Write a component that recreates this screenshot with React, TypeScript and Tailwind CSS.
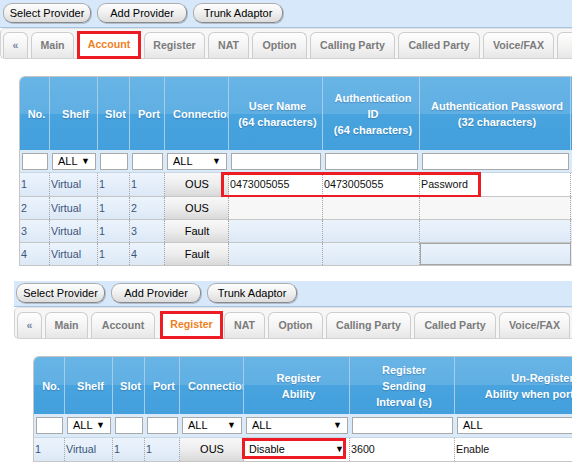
import React from "react";

type TabT = { l: string; w: string; active?: boolean; extra?: string };
type Col = { w: string; h: React.ReactNode; pad?: string };

const hdrBg =
  "bg-[linear-gradient(180deg,#68b4e6_0%,#60afe3_50%,#48a3de_50%,#43a0dc_100%)]";
const rowBg =
  "bg-[linear-gradient(180deg,#ebf3fc_0%,#e5effa_50%,#dce8f6_100%)]";
const connBg =
  "bg-[linear-gradient(180deg,#f8f8f8_0%,#ededed_50%,#d9d9d9_100%)]";

function Btn({ label, w }: { label: string; w: string }) {
  return (
    <div
      className={`${w} h-[20px] shrink-0 flex items-center justify-center rounded-[9px] border border-[#8a8a8a] border-t-[#adadad] border-l-[#adadad] bg-[linear-gradient(180deg,#fdfdfd_0%,#f0f0f0_50%,#dcdcdc_100%)] text-[11px] text-black shadow-[1px_1px_0_rgba(0,0,0,0.18)]`}
    >
      {label}
    </div>
  );
}

function ButtonBar({ cls, first }: { cls: string; first: string }) {
  return (
    <div className={`flex gap-[6px] bg-[#d7e8fb] border-b border-[#a6c4e2] ${cls}`}>
      <Btn label="Select Provider" w={first} />
      <Btn label="Add Provider" w="w-[90px]" />
      <Btn label="Trunk Adaptor" w="w-[90px]" />
    </div>
  );
}

function Tab({ t }: { t: TabT }) {
  if (t.active) {
    return (
      <div
        className={`${t.w} ${t.extra ?? ""} h-[28px] -mb-[1px] shrink-0 flex items-center justify-center border-[3px] border-[#ed1c24] bg-white text-[#f07f1e] font-bold text-[10.6px]`}
      >
        {t.l}
      </div>
    );
  }
  return (
    <div
      className={`${t.w} h-[26px] shrink-0 flex items-center justify-center rounded-t-[6px] border border-b-0 border-[#cdcdcd] bg-[linear-gradient(180deg,#fefefe_0%,#f2f2f2_60%,#e6e6e6_100%)] font-bold text-[10.6px] ${
        t.l === "«" ? "text-[#7587a1]" : "text-[#7b7b7b]"
      }`}
    >
      {t.l}
    </div>
  );
}

function TabBar({ tabs, h }: { tabs: TabT[]; h: string }) {
  return (
    <div
      className={`${h} flex items-end gap-[3px] pl-[2px] border border-r-0 border-t-[#e2e2e2] border-[#d3d3d3] rounded-l-[5px] bg-[#f6f6f6] overflow-visible`}
    >
      {tabs.map((t) => (
        <Tab key={t.l} t={t} />
      ))}
    </div>
  );
}

function Input({ text }: { text?: string }) {
  return (
    <div className="w-full h-[17px] bg-white border border-[#a9a9a9] flex items-center pl-[5px] text-[11px] text-black">
      {text}
    </div>
  );
}

function Select({ text, arrow = true }: { text: string; arrow?: boolean }) {
  return (
    <div className="w-full h-[17px] bg-white border border-[#a9a9a9] flex items-center justify-between pl-[5px] pr-[5px] text-[11px] text-black">
      <span>{text}</span>
      {arrow && <span className="text-[9px] leading-none">▼</span>}
    </div>
  );
}

function HeaderRow({ cols, h }: { cols: Col[]; h: string }) {
  return (
    <div className={`flex ${h} ${hdrBg}`}>
      {cols.map((c, i) => (
        <div
          key={i}
          className={`${c.w} shrink-0 h-full flex items-center overflow-hidden border-r border-[#a5cdea] ${
            c.pad ?? "pl-[5px] pr-[1px]"
          }`}
        >
          <div className="w-full text-center whitespace-nowrap text-white font-bold text-[11px] leading-[16px] [text-shadow:0_1px_1px_rgba(20,70,120,0.35)]">
            {c.h}
          </div>
        </div>
      ))}
    </div>
  );
}

const cellBase =
  "shrink-0 h-full flex items-center pl-[1px] border-r border-dotted border-[#a5a5a5] text-[10.7px] overflow-hidden whitespace-nowrap";
const blue = "text-[#3b5479]";

function Section1() {
  const cols: Col[] = [
    { w: "w-[30px]", h: "No." },
    { w: "w-[48px]", h: "Shelf" },
    { w: "w-[32px]", h: "Slot" },
    { w: "w-[35px]", h: "Port" },
    { w: "w-[64px]", h: "Connection", pad: "pl-[8px] pr-0" },
    {
      w: "w-[94px]",
      h: (
        <>
          User Name
          <br />
          (64 characters)
        </>
      ),
    },
    {
      w: "w-[97px]",
      h: (
        <>
          Authentication
          <br />
          ID
          <br />
          (64 characters)
        </>
      ),
    },
    {
      w: "w-[151px]",
      h: (
        <>
          Authentication Password
          <br />
          (32 characters)
        </>
      ),
    },
    { w: "w-[120px]", h: "" },
  ];
  const w = cols.map((c) => c.w);
  const rows = [
    { n: "1", conn: "OUS", edit: "bg-white", u: "0473005055", a: "0473005055", p: "Password" },
    { n: "2", conn: "OUS", edit: "bg-[#f7f7f7]", u: "", a: "", p: "" },
    { n: "3", conn: "Fault", edit: "", u: "", a: "", p: "" },
    { n: "4", conn: "Fault", edit: "", u: "", a: "", p: "", focus: true },
  ];
  const tabs: TabT[] = [
    { l: "«", w: "w-[25px]" },
    { l: "Main", w: "w-[43px]" },
    { l: "Account", w: "w-[64px]", active: true },
    { l: "Register", w: "w-[61px]" },
    { l: "NAT", w: "w-[41px]" },
    { l: "Option", w: "w-[55px]" },
    { l: "Calling Party", w: "w-[85px]" },
    { l: "Called Party", w: "w-[82px]" },
    { l: "Voice/FAX", w: "w-[71px]" },
    { l: "RTP", w: "w-[50px]" },
  ];
  return (
    <div>
      <ButtonBar cls="h-[28px] pt-[3px] pl-[3px]" first="w-[88px]" />
      <TabBar tabs={tabs} h="h-[31px]" />
      <div className="pt-[17px]">
        <div className="ml-[19px] w-max border-l border-t border-[#c6c6c6] rounded-tl-[6px] overflow-hidden">
          <HeaderRow cols={cols} h="h-[73px]" />
          <div className="flex h-[23px] items-center bg-[#dbeaf8] border-b border-[#c9d7e4]">
            <div className={`${w[0]} shrink-0 px-[2px]`}><Input /></div>
            <div className={`${w[1]} shrink-0 px-[2px]`}><Select text="ALL" /></div>
            <div className={`${w[2]} shrink-0 px-[2px]`}><Input /></div>
            <div className={`${w[3]} shrink-0 px-[2px]`}><Input /></div>
            <div className={`${w[4]} shrink-0 px-[2px]`}><Select text="ALL" /></div>
            <div className={`${w[5]} shrink-0 px-[2px]`}><Input /></div>
            <div className={`${w[6]} shrink-0 px-[2px]`}><Input /></div>
            <div className={`${w[7]} shrink-0 px-[2px]`}><Input /></div>
            <div className={`${w[8]} shrink-0`} />
          </div>
          {rows.map((r, i) => (
            <div
              key={r.n}
              className={`relative flex ${i === 0 ? "h-[24px]" : "h-[23px]"} border-b border-[#c6c6c6] ${rowBg}`}
            >
              <div className={`${w[0]} ${cellBase} ${blue}`}>{r.n}</div>
              <div className={`${w[1]} ${cellBase} ${blue}`}>Virtual</div>
              <div className={`${w[2]} ${cellBase} ${blue}`}>1</div>
              <div className={`${w[3]} ${cellBase} ${blue}`}>{r.n}</div>
              <div className={`${w[4]} ${cellBase} ${connBg} justify-center text-[11px] text-black`}>
                {r.conn}
              </div>
              <div className={`${w[5]} ${cellBase} ${r.edit} text-[#111]`}>{r.u}</div>
              <div className={`${w[6]} ${cellBase} ${r.edit} text-[#111]`}>{r.a}</div>
              <div
                className={`${w[7]} ${cellBase} ${r.edit} text-[#111] ${
                  r.focus ? "border border-solid border-[#858585]" : ""
                }`}
              >
                {r.p}
              </div>
              <div className={`${w[8]} ${cellBase} ${r.edit}`} />
              {i === 0 && (
                <div className="absolute left-[201px] top-[-1px] w-[260px] h-[26px] border-[3px] border-[#ed1c24] pointer-events-none" />
              )}
            </div>
          ))}
        </div>
      </div>
    </div>
  );
}

function Section2() {
  const cols: Col[] = [
    { w: "w-[31px]", h: "No." },
    { w: "w-[48px]", h: "Shelf" },
    { w: "w-[32px]", h: "Slot" },
    { w: "w-[35px]", h: "Port" },
    { w: "w-[64px]", h: "Connection", pad: "pl-[8px] pr-0" },
    {
      w: "w-[106px]",
      h: (
        <>
          Register
          <br />
          Ability
        </>
      ),
    },
    {
      w: "w-[105px]",
      h: (
        <>
          Register
          <br />
          Sending
          <br />
          Interval (s)
        </>
      ),
    },
    {
      w: "w-[172px]",
      h: (
        <>
          Un-Register
          <br />
          Ability when port fault
        </>
      ),
    },
  ];
  const w = cols.map((c) => c.w);
  const tabs: TabT[] = [
    { l: "«", w: "w-[25px]" },
    { l: "Main", w: "w-[43px]" },
    { l: "Account", w: "w-[64px]" },
    { l: "Register", w: "w-[63px]", active: true, extra: "ml-[2px] -mr-[2px]" },
    { l: "NAT", w: "w-[41px]" },
    { l: "Option", w: "w-[55px]" },
    { l: "Calling Party", w: "w-[85px]" },
    { l: "Called Party", w: "w-[82px]" },
    { l: "Voice/FAX", w: "w-[71px]" },
    { l: "RTP", w: "w-[50px]" },
  ];
  return (
    <div>
      <ButtonBar cls="h-[26px] pt-[2px] pl-[2px]" first="w-[89px]" />
      <TabBar tabs={tabs} h="h-[32px]" />
      <div className="pt-[17px]">
        <div className="ml-[19px] w-max border-l border-t border-[#c6c6c6] rounded-tl-[6px] overflow-hidden">
          <HeaderRow cols={cols} h="h-[57px]" />
          <div className="flex h-[24px] items-center bg-[#dbeaf8] border-b border-[#c9d7e4]">
            <div className={`${w[0]} shrink-0 px-[2px]`}><Input /></div>
            <div className={`${w[1]} shrink-0 px-[2px]`}><Select text="ALL" /></div>
            <div className={`${w[2]} shrink-0 px-[2px]`}><Input /></div>
            <div className={`${w[3]} shrink-0 px-[2px]`}><Input /></div>
            <div className={`${w[4]} shrink-0 px-[2px]`}><Select text="ALL" /></div>
            <div className={`${w[5]} shrink-0 px-[2px]`}><Select text="ALL" /></div>
            <div className={`${w[6]} shrink-0 px-[2px]`}><Input /></div>
            <div className={`${w[7]} shrink-0 px-[2px]`}><Select text="ALL" /></div>
          </div>
          <div className={`relative flex h-[24px] border-b border-[#c6c6c6] ${rowBg}`}>
            <div className={`${w[0]} ${cellBase} ${blue}`}>1</div>
            <div className={`${w[1]} ${cellBase} ${blue}`}>Virtual</div>
            <div className={`${w[2]} ${cellBase} ${blue}`}>1</div>
            <div className={`${w[3]} ${cellBase} ${blue}`}>1</div>
            <div className={`${w[4]} ${cellBase} ${connBg} justify-center text-[11px] text-black`}>
              OUS
            </div>
            <div className={`${w[5]} ${cellBase} bg-white px-[1px]`}>
              <div className="w-full h-[16px] flex items-center justify-between pl-[4px] pr-[4px] text-[10.7px] text-black">
                <span>Disable</span>
                <span className="text-[9px] leading-none">▼</span>
              </div>
            </div>
            <div className={`${w[6]} ${cellBase} bg-white text-[#111]`}>3600</div>
            <div className={`${w[7]} ${cellBase} bg-white text-[#111]`}>Enable</div>
            <div className="absolute left-[208px] top-[0px] w-[104px] h-[21px] border-[3px] border-[#ed1c24] pointer-events-none" />
          </div>
        </div>
      </div>
    </div>
  );
}

export default function App() {
  return (
    <div className="w-[572px] h-[465px] overflow-hidden bg-white font-['Liberation_Sans',Arial,sans-serif] text-black">
      <Section1 />
      <div className="mt-[15px] ml-[14px]">
        <Section2 />
      </div>
    </div>
  );
}
